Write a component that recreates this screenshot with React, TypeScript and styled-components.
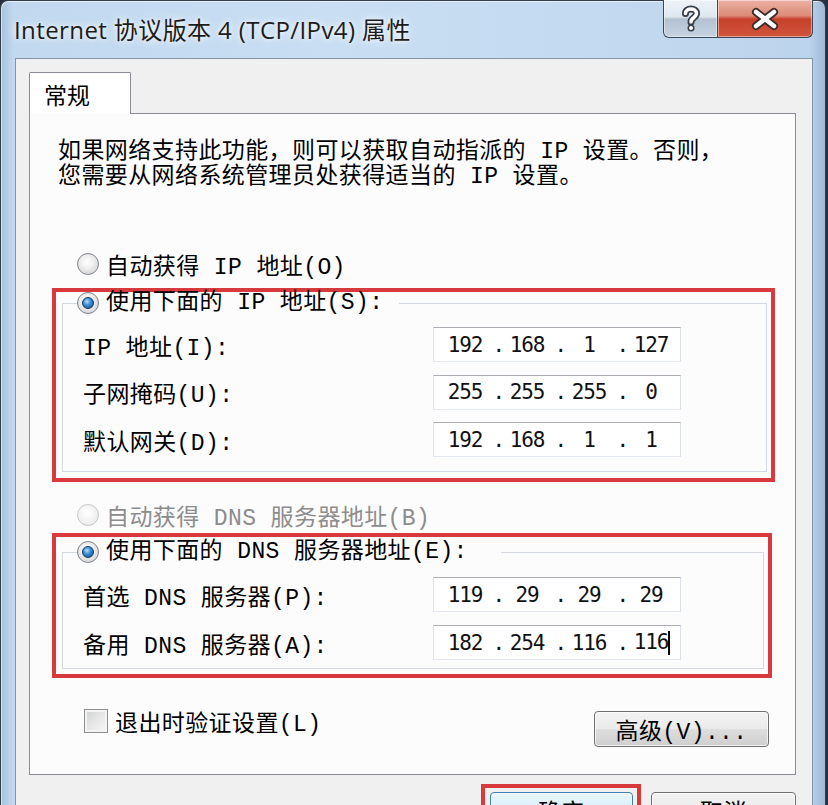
import React from 'react';
import styled, { createGlobalStyle } from 'styled-components';

const GlobalStyle = createGlobalStyle`
  html, body {
    margin: 0;
    padding: 0;
    height: 805px;
    overflow: hidden;
    background: #24303d;
  }
  body {
    font-family: "Liberation Mono", "Noto Sans CJK SC", monospace;
  }
`;

const RED = '#d8393c';

const Window = styled.div`
  width: 826px;
  height: 850px;
  box-sizing: border-box;
  border: 1px solid #34404d;
  border-bottom: none;
  border-radius: 8px 8px 0 0;
  background: linear-gradient(90deg, #a9c3dd 0%, #c1d8ef 1.5%, #c9def3 40%, #c4daf0 70%, #bcd4ec 98%, #9fb8d2 100%);
  box-shadow: inset 1px 1px 0 rgba(255, 255, 255, 0.55);
  display: flex;
  flex-direction: column;
  padding: 0 12px 0 14px;
`;

const TitleBar = styled.div`
  height: 57px;
  display: flex;
  align-items: flex-start;
  justify-content: space-between;
  flex-shrink: 0;
`;

const Title = styled.div`
  margin-left: -1px;
  line-height: 57px;
  font-family: "Open Sans", "Noto Sans CJK SC", sans-serif;
  font-size: 24px;
  letter-spacing: 0.4px;
  color: #1c1c1c;
  text-shadow: 0 0 10px rgba(255, 255, 255, 0.9), 0 0 4px rgba(255, 255, 255, 0.8);
  white-space: nowrap;
`;

const Captions = styled.div`
  display: flex;
  margin-top: -1px;
`;

const CaptionButton = styled.div<{ $kind: 'help' | 'close' }>`
  height: 38px;
  width: ${(p) => (p.$kind === 'help' ? '55px' : '95px')};
  box-sizing: border-box;
  border: 1px solid #3b4858;
  border-top: none;
  border-left: ${(p) => (p.$kind === 'close' ? 'none' : '1px solid #3b4858')};
  border-radius: ${(p) => (p.$kind === 'help' ? '0 0 0 6px' : '0 0 6px 0')};
  background: ${(p) =>
    p.$kind === 'help'
      ? 'linear-gradient(180deg, #eef3f8 0%, #dfe7ef 45%, #b3c1d1 52%, #c6d3e1 100%)'
      : 'linear-gradient(180deg, #eab0a3 0%, #de8b78 42%, #c6412b 52%, #d2553c 100%)'};
  box-shadow: inset 0 0 0 1px rgba(255, 255, 255, 0.45);
  display: flex;
  align-items: center;
  justify-content: center;
`;

const Client = styled.div`
  flex: 1;
  background: #f0f0f0;
  border: 1px solid #8096ad;
  border-bottom: none;
  padding: 13px 16px 0 13px;
  display: flex;
  flex-direction: column;
`;

const TabStrip = styled.div`
  display: flex;
  height: 41px;
`;

const Tab = styled.div`
  width: 102px;
  box-sizing: border-box;
  border: 1px solid #898c95;
  border-bottom: none;
  border-radius: 2px 2px 0 0;
  background: #ffffff;
  margin-bottom: -1px;
  position: relative;
  z-index: 1;
  padding-left: 14px;
  line-height: 42px;
  font-family: "Noto Sans CJK SC", sans-serif;
  font-size: 23px;
  color: #000;
`;

const Panel = styled.div`
  height: 662px;
  box-sizing: border-box;
  border: 1px solid #898c95;
  background: #fcfcfd;
  padding: 26px 0 0 22px;
  display: flex;
  flex-direction: column;
  align-items: flex-start;
`;

const Text = styled.span<{ $muted?: boolean }>`
  font-size: 23px;
  letter-spacing: 0.4px;
  color: ${(p) => (p.$muted ? '#8c8c8c' : '#000')};
  white-space: nowrap;
`;

const Description = styled.div`
  margin-left: 6px;
  font-size: 23px;
  line-height: 25px;
  letter-spacing: 0.4px;
  color: #000;
  white-space: nowrap;
`;

const OptionRow = styled.div<{ $top: number }>`
  margin: ${(p) => p.$top}px 0 0 25px;
  height: 30px;
  display: flex;
  align-items: center;
  gap: 7px;
`;

const Radio = styled.span<{ $checked?: boolean; $disabled?: boolean }>`
  width: 22px;
  height: 22px;
  box-sizing: border-box;
  border-radius: 50%;
  flex-shrink: 0;
  border: 1px solid ${(p) => (p.$disabled ? '#c8c8c8' : '#7f858c')};
  background: ${(p) =>
    p.$disabled
      ? 'radial-gradient(circle at 45% 40%, #ffffff 0%, #f4f4f4 45%, #e2e2e2 100%)'
      : 'radial-gradient(circle at 45% 40%, #ffffff 0%, #eeeeee 40%, #c8c8c8 100%)'};
  display: flex;
  align-items: center;
  justify-content: center;

  &::after {
    content: '';
    display: ${(p) => (p.$checked ? 'block' : 'none')};
    width: 12px;
    height: 12px;
    box-sizing: border-box;
    border-radius: 50%;
    border: 1px solid #14375c;
    background: radial-gradient(circle at 40% 35%, #b5e0ff 0%, #3d8fd6 40%, #124a86 100%);
  }
`;

const Highlight = styled.div<{ $width: number; $padTop: number; $top: number }>`
  width: ${(p) => p.$width}px;
  box-sizing: border-box;
  margin-top: ${(p) => p.$top}px;
  border: 4px solid ${RED};
  padding-top: ${(p) => p.$padTop}px;
`;

const Group = styled.fieldset<{ $padBottom: number; $marginBottom: number }>`
  margin: 0 4px ${(p) => p.$marginBottom}px 6px;
  border: 1px solid #d3d9df;
  padding: 0 0 ${(p) => p.$padBottom}px 14px;
  min-width: 0;
`;

const Legend = styled.legend<{ $width: number }>`
  padding: 0;
  width: ${(p) => p.$width}px;
  box-sizing: border-box;
  line-height: 22px;
  height: 22px;
  background: #fcfcfd;
`;

const LegendInner = styled.span`
  display: inline-flex;
  align-items: center;
  gap: 7px;
  height: 22px;
`;

const Fields = styled.div<{ $padTop: number; $gap: number }>`
  display: grid;
  grid-template-columns: 350px 248px;
  grid-auto-rows: 35px;
  row-gap: ${(p) => p.$gap}px;
  padding: ${(p) => p.$padTop}px 0 0 6px;
  align-items: center;
`;

const AddressBox = styled.div`
  height: 35px;
  box-sizing: border-box;
  border: 1px solid;
  border-color: #abadb3 #dbdfe6 #e3e9ef #e2e3ea;
  background: #ffffff;
  display: flex;
  align-items: center;
  padding-left: 8px;
  font-family: "DejaVu Sans Mono", monospace;
  font-size: 21px;
  letter-spacing: -1.2px;
  color: #111;
`;

const Octet = styled.span`
  width: 46px;
  text-align: center;
`;

const Dot = styled.span`
  width: 16px;
  text-align: right;
`;

const Caret = styled.span`
  display: inline-block;
  width: 2px;
  height: 24px;
  margin-right: -2px;
  vertical-align: middle;
  background: #000;
`;

const BottomRow = styled.div`
  width: 717px;
  margin-top: 33px;
  display: flex;
  align-items: flex-start;
  justify-content: space-between;
`;

const CheckLabel = styled.label`
  margin: -2px 0 0 32px;
  height: 24px;
  display: flex;
  align-items: center;
  gap: 7px;
`;

const CheckBox = styled.span`
  width: 24px;
  height: 24px;
  box-sizing: border-box;
  border: 1px solid #8e8f8f;
  background: linear-gradient(135deg, #cfd0d1 0%, #e6e6e6 50%, #f8f8f8 100%);
  box-shadow: inset 0 0 0 2px #f4f4f4;
`;

const PushButton = styled.div<{ $width: number; $primary?: boolean }>`
  width: ${(p) => p.$width}px;
  height: 36px;
  box-sizing: border-box;
  border: 1px solid ${(p) => (p.$primary ? '#3c7fb1' : '#707070')};
  border-radius: 4px;
  background: ${(p) =>
    p.$primary
      ? 'linear-gradient(180deg, #eaf6fd 0%, #d9f0fc 48%, #bee6fd 52%, #a7d9f5 100%)'
      : 'linear-gradient(180deg, #f3f3f3 0%, #ebebeb 48%, #dddddd 52%, #cfcfcf 100%)'};
  box-shadow: inset 0 0 0 1px rgba(255, 255, 255, 0.7);
  display: flex;
  align-items: center;
  justify-content: center;
  font-size: 23px;
  letter-spacing: 0.4px;
  color: #000;
  white-space: nowrap;
`;

const Footer = styled.div`
  display: flex;
  justify-content: flex-end;
  align-items: flex-start;
  gap: 10px;
  padding-top: 9px;
`;

const FocusMark = styled.div`
  border: 4px solid ${RED};
  padding: 4px 4px 0 5px;
  height: 50px;
`;

const CancelWrap = styled.div`
  margin-top: 8px;
`;

const HelpGlyph = () => (
  <svg width="20" height="28" viewBox="0 0 20 28">
    <path d="M4.5 8.5C4.5 2.5 15.5 2.5 15.5 8.5C15.5 12.5 10 12.5 10 17" fill="none" stroke="#333c47" strokeWidth="7" strokeLinecap="round" />
    <circle cx="10" cy="23" r="3.5" fill="#333c47" />
    <path d="M4.5 8.5C4.5 2.5 15.5 2.5 15.5 8.5C15.5 12.5 10 12.5 10 17" fill="none" stroke="#ffffff" strokeWidth="3.6" strokeLinecap="round" />
    <circle cx="10" cy="23" r="2" fill="#ffffff" />
  </svg>
);

const CloseGlyph = () => (
  <svg width="32" height="24" viewBox="0 0 32 24">
    <path d="M7 5L25 19M25 5L7 19" fill="none" stroke="#3a2a2a" strokeWidth="8" strokeLinecap="round" />
    <path d="M7 5L25 19M25 5L7 19" fill="none" stroke="#ffffff" strokeWidth="4.5" strokeLinecap="round" />
  </svg>
);

type Field = { label: string; value: string[]; caret?: boolean };

const AddressInput = ({ value, caret }: { value: string[]; caret?: boolean }) => (
  <AddressBox>
    {value.map((v, i) => (
      <React.Fragment key={i}>
        <Octet>
          {v}
          {caret && i === value.length - 1 && <Caret />}
        </Octet>
        {i < value.length - 1 && <Dot>.</Dot>}
      </React.Fragment>
    ))}
  </AddressBox>
);

const ipFields: Field[] = [
  { label: 'IP 地址(I):', value: ['192', '168', '1', '127'] },
  { label: '子网掩码(U):', value: ['255', '255', '255', '0'] },
  { label: '默认网关(D):', value: ['192', '168', '1', '1'] },
];

const dnsFields: Field[] = [
  { label: '首选 DNS 服务器(P):', value: ['119', '29', '29', '29'] },
  { label: '备用 DNS 服务器(A):', value: ['182', '254', '116', '116'], caret: true },
];

const FieldList = ({ fields, padTop, gap }: { fields: Field[]; padTop: number; gap: number }) => (
  <Fields $padTop={padTop} $gap={gap}>
    {fields.map((f) => (
      <React.Fragment key={f.label}>
        <Text>{f.label}</Text>
        <AddressInput value={f.value} caret={f.caret} />
      </React.Fragment>
    ))}
  </Fields>
);

export default function App() {
  return (
    <>
      <GlobalStyle />
      <Window>
        <TitleBar>
          <Title>Internet 协议版本 4 (TCP/IPv4) 属性</Title>
          <Captions>
            <CaptionButton $kind="help">
              <HelpGlyph />
            </CaptionButton>
            <CaptionButton $kind="close">
              <CloseGlyph />
            </CaptionButton>
          </Captions>
        </TitleBar>

        <Client>
          <TabStrip>
            <Tab>常规</Tab>
          </TabStrip>
          <Panel>
            <Description>
              如果网络支持此功能，则可以获取自动指派的 IP 设置。否则，
              <br />
              您需要从网络系统管理员处获得适当的 IP 设置。
            </Description>

            <OptionRow $top={59}>
              <Radio />
              <Text>自动获得 IP 地址(O)</Text>
            </OptionRow>

            <Highlight $width={723} $padTop={0} $top={9}>
              <Group $padBottom={14} $marginBottom={6}>
                <Legend $width={322}>
                  <LegendInner>
                    <Radio $checked />
                    <Text>使用下面的 IP 地址(S):</Text>
                  </LegendInner>
                </Legend>
                <FieldList fields={ipFields} padTop={13} gap={12.5} />
              </Group>
            </Highlight>

            <OptionRow $top={18}>
              <Radio $disabled />
              <Text $muted>自动获得 DNS 服务器地址(B)</Text>
            </OptionRow>

            <Highlight $width={720} $padTop={4} $top={3}>
              <Group $padBottom={8} $marginBottom={5}>
                <Legend $width={424}>
                  <LegendInner>
                    <Radio $checked />
                    <Text>使用下面的 DNS 服务器地址(E):</Text>
                  </LegendInner>
                </Legend>
                <FieldList fields={dnsFields} padTop={14} gap={13} />
              </Group>
            </Highlight>

            <BottomRow>
              <CheckLabel>
                <CheckBox />
                <Text>退出时验证设置(L)</Text>
              </CheckLabel>
              <PushButton $width={175}>高级(V)...</PushButton>
            </BottomRow>
          </Panel>

          <Footer>
            <FocusMark>
              <PushButton $width={143} $primary>
                确定
              </PushButton>
            </FocusMark>
            <CancelWrap>
              <PushButton $width={145}>取消</PushButton>
            </CancelWrap>
          </Footer>
        </Client>
      </Window>
    </>
  );
}
